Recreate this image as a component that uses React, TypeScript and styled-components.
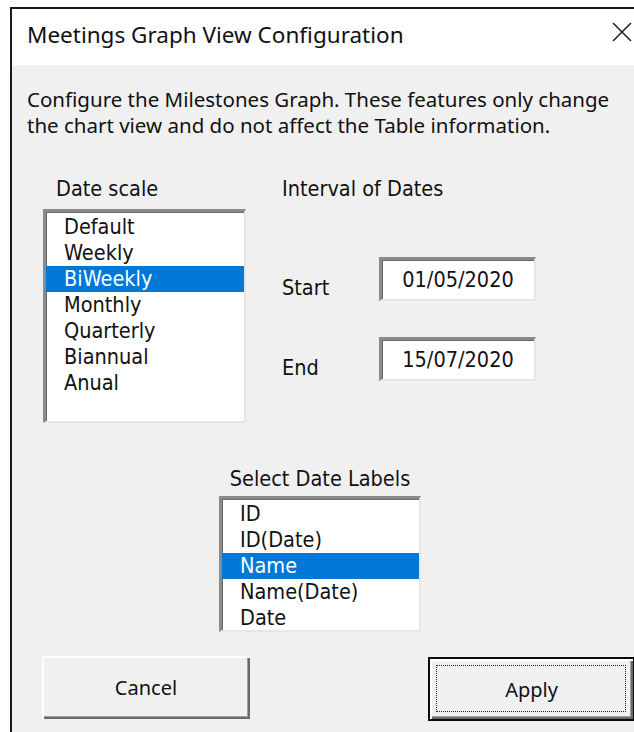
import React from "react";
import styled, { createGlobalStyle } from "styled-components";

const GlobalStyle = createGlobalStyle`
  html, body {
    margin: 0;
    padding: 0;
    background: #ffffff;
    overflow: hidden;
  }
`;

const Window = styled.div`
  margin: 7px 0 0 10px;
  width: 640px;
  height: 740px;
  border-left: 2px solid #1a1a1a;
  border-top: 2px solid #1a1a1a;
  background: #f0f0f0;
  display: flex;
  flex-direction: column;
  color: #000;
`;

const TitleBar = styled.div`
  box-sizing: border-box;
  height: 56px;
  background: #ffffff;
  display: flex;
  align-items: center;
  justify-content: space-between;
  padding: 0 20px 5px 15px;
  font-family: "Noto Sans", "Open Sans", sans-serif;
  font-size: 22.5px;
  color: #111;
`;

const CloseGlyph = styled.svg`
  width: 20px;
  height: 20px;
  margin-top: -5px;
`;

const Body = styled.div`
  display: flex;
  flex-direction: column;
  padding: 21px 0 0 15px;
`;

const Description = styled.p`
  margin: 0;
  font-family: "Noto Sans", "Open Sans", sans-serif;
  font-size: 20.5px;
  line-height: 26px;
  color: #111;
`;

const Columns = styled.div`
  display: flex;
  margin-top: 38px;
  padding-left: 16px;
  gap: 36px;
`;

const Column = styled.div`
  display: flex;
  flex-direction: column;
`;

const controlFont = `
  font-family: "DejaVu Sans Condensed", "DejaVu Sans", sans-serif;
  font-size: 21.5px;
`;

const Label = styled.div<{ $indent?: number }>`
  ${controlFont}
  line-height: 26px;
  color: #111;
  padding-left: ${(p) => p.$indent ?? 0}px;
`;

const sunken = `
  box-sizing: border-box;
  background: #ffffff;
  border-style: solid;
  border-width: 3px 2px 2px 3px;
  border-color: #8a8a8a #e6e6e6 #e6e6e6 #8a8a8a;
  box-shadow: inset 1px 1px 0 #6a6a6a;
`;

const ListBox = styled.div<{ $w: number; $h: number }>`
  ${sunken}
  width: ${(p) => p.$w}px;
  height: ${(p) => p.$h}px;
  padding-top: 2px;
`;

const ListItem = styled.div<{ $selected?: boolean }>`
  ${controlFont}
  line-height: 26px;
  height: 26px;
  padding-left: 18px;
  background: ${(p) => (p.$selected ? "#0078d7" : "transparent")};
  color: ${(p) => (p.$selected ? "#ffffff" : "#111111")};
`;

const FieldRow = styled.div`
  display: flex;
  align-items: center;
`;

const FieldLabel = styled.div`
  ${controlFont}
  width: 97px;
  line-height: 26px;
  padding-top: 18px;
  color: #111;
`;

const TextBox = styled.div`
  ${sunken}
  width: 157px;
  height: 44px;
  display: flex;
  align-items: center;
  justify-content: center;
  ${controlFont}
  color: #111;
`;

const Section = styled.div`
  display: flex;
  flex-direction: column;
  align-items: center;
  margin-top: 43px;
  margin-left: 192px;
  width: 202px;
`;

const ButtonRow = styled.div`
  display: flex;
  gap: 178px;
  margin-top: 24px;
  padding-left: 15px;
`;

const Button = styled.div<{ $default?: boolean }>`
  box-sizing: border-box;
  width: ${(p) => (p.$default ? 207 : 208)}px;
  height: ${(p) => (p.$default ? 64 : 63)}px;
  margin-top: ${(p) => (p.$default ? 1 : 0)}px;
  background: #f0f0f0;
  display: flex;
  align-items: center;
  justify-content: center;
  font-family: "Noto Sans", "Open Sans", sans-serif;
  font-size: 20px;
  color: #111;
  border: ${(p) => (p.$default ? "2px solid #0a0a0a" : "none")};
  box-shadow: inset 2px 2px 0 #ffffff, inset -2px -2px 0 #696969,
    inset -3px -3px 0 #a0a0a0;
  position: relative;
`;

const FocusRing = styled.span`
  position: absolute;
  inset: 6px 7px 7px 6px;
  border: 1px dotted #222;
`;

const ButtonText = styled.span`
  position: relative;
`;

const scales = ["Default", "Weekly", "BiWeekly", "Monthly", "Quarterly", "Biannual", "Anual"];
const labels = ["ID", "ID(Date)", "Name", "Name(Date)", "Date"];

export default function App() {
  return (
    <>
      <GlobalStyle />
      <Window>
        <TitleBar>
          <span>Meetings Graph View Configuration</span>
          <CloseGlyph viewBox="0 0 20 20">
            <path d="M1 1L19 19M19 1L1 19" stroke="#1a1a1a" strokeWidth="1.5" />
          </CloseGlyph>
        </TitleBar>
        <Body>
          <Description>
            Configure the Milestones Graph. These features only change
            <br />
            the chart view and do not affect the Table information.
          </Description>
          <Columns>
            <Column>
              <Label $indent={13}>Date scale</Label>
              <ListBox $w={203} $h={214} style={{ marginTop: 7 }}>
                {scales.map((s) => (
                  <ListItem key={s} $selected={s === "BiWeekly"}>
                    {s}
                  </ListItem>
                ))}
              </ListBox>
            </Column>
            <Column>
              <Label>Interval of Dates</Label>
              <FieldRow style={{ marginTop: 55 }}>
                <FieldLabel>Start</FieldLabel>
                <TextBox>01/05/2020</TextBox>
              </FieldRow>
              <FieldRow style={{ marginTop: 36 }}>
                <FieldLabel>End</FieldLabel>
                <TextBox>15/07/2020</TextBox>
              </FieldRow>
            </Column>
          </Columns>
          <Section>
            <Label>Select Date Labels</Label>
            <ListBox $w={202} $h={136} style={{ marginTop: 4 }}>
              {labels.map((s) => (
                <ListItem key={s} $selected={s === "Name"}>
                  {s}
                </ListItem>
              ))}
            </ListBox>
          </Section>
          <ButtonRow>
            <Button>Cancel</Button>
            <Button $default>
              <FocusRing />
              <ButtonText>Apply</ButtonText>
            </Button>
          </ButtonRow>
        </Body>
      </Window>
    </>
  );
}
